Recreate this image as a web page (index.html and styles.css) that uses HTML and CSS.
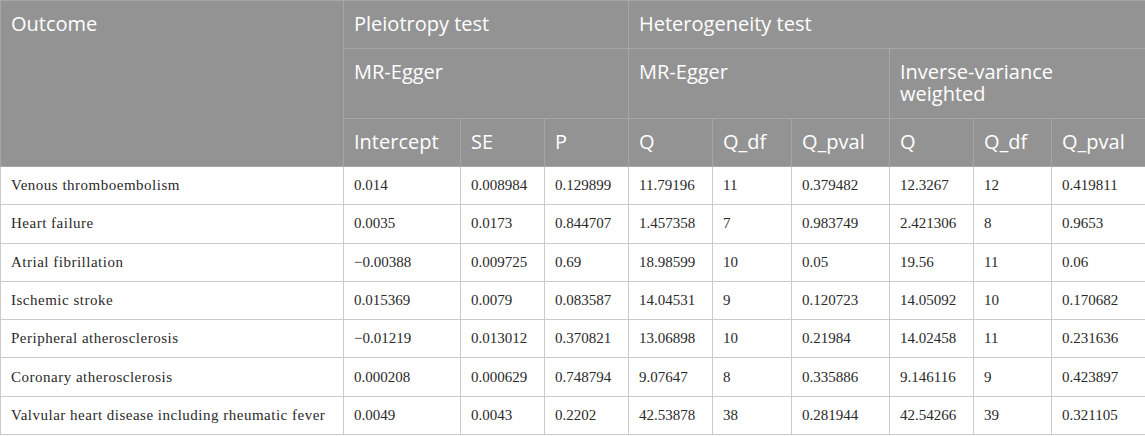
FILE: index.html
```html
<!DOCTYPE html>
<html>
<head>
<meta charset="utf-8">
<link rel="stylesheet" href="styles.css">
</head>
<body>
<table class="tbl">
  <colgroup>
    <col class="c-out"><col class="c-int"><col class="c-se"><col class="c-p">
    <col class="c-q"><col class="c-qdf"><col class="c-qp">
    <col class="c-q2"><col class="c-qdf2"><col class="c-qp2">
  </colgroup>
  <thead>
    <tr class="h1">
      <th rowspan="3">Outcome</th>
      <th colspan="3">Pleiotropy test</th>
      <th colspan="6">Heterogeneity test</th>
    </tr>
    <tr class="h2">
      <th colspan="3">MR-Egger</th>
      <th colspan="3">MR-Egger</th>
      <th colspan="3">Inverse-variance weighted</th>
    </tr>
    <tr class="h3">
      <th>Intercept</th><th>SE</th><th>P</th>
      <th>Q</th><th>Q_df</th><th>Q_pval</th>
      <th>Q</th><th>Q_df</th><th>Q_pval</th>
    </tr>
  </thead>
  <tbody>
    <tr><td class="name">Venous thromboembolism</td><td>0.014</td><td>0.008984</td><td>0.129899</td><td>11.79196</td><td>11</td><td>0.379482</td><td>12.3267</td><td>12</td><td>0.419811</td></tr>
    <tr><td class="name">Heart failure</td><td>0.0035</td><td>0.0173</td><td>0.844707</td><td>1.457358</td><td>7</td><td>0.983749</td><td>2.421306</td><td>8</td><td>0.9653</td></tr>
    <tr><td class="name">Atrial fibrillation</td><td>&minus;0.00388</td><td>0.009725</td><td>0.69</td><td>18.98599</td><td>10</td><td>0.05</td><td>19.56</td><td>11</td><td>0.06</td></tr>
    <tr><td class="name">Ischemic stroke</td><td>0.015369</td><td>0.0079</td><td>0.083587</td><td>14.04531</td><td>9</td><td>0.120723</td><td>14.05092</td><td>10</td><td>0.170682</td></tr>
    <tr><td class="name">Peripheral atherosclerosis</td><td>&minus;0.01219</td><td>0.013012</td><td>0.370821</td><td>13.06898</td><td>10</td><td>0.21984</td><td>14.02458</td><td>11</td><td>0.231636</td></tr>
    <tr><td class="name">Coronary atherosclerosis</td><td>0.000208</td><td>0.000629</td><td>0.748794</td><td>9.07647</td><td>8</td><td>0.335886</td><td>9.146116</td><td>9</td><td>0.423897</td></tr>
    <tr><td class="name">Valvular heart disease including rheumatic fever</td><td>0.0049</td><td>0.0043</td><td>0.2202</td><td>42.53878</td><td>38</td><td>0.281944</td><td>42.54266</td><td>39</td><td>0.321105</td></tr>
  </tbody>
</table>
</body>
</html>
```
FILE: styles.css
```css
html, body {
  margin: 0;
  padding: 0;
  background: #ffffff;
}
.tbl {
  width: 1145px;
  table-layout: fixed;
  border-collapse: collapse;
}
.c-out { width: 343px; }
.c-int { width: 117px; }
.c-se { width: 84px; }
.c-p { width: 84px; }
.c-q { width: 84px; }
.c-qdf { width: 79px; }
.c-qp { width: 98px; }
.c-q2 { width: 84px; }
.c-qdf2 { width: 78px; }
.c-qp2 { width: 94px; }

.tbl th {
  background: #939393;
  color: #ffffff;
  font-family: "Open Sans", "DejaVu Sans", sans-serif;
  font-weight: 400;
  font-size: 20px;
  line-height: 22px;
  text-align: left;
  vertical-align: top;
  padding: 12px 10px 13px 10px;
  height: 22px;
  border: 1px solid #a6a6a6;
}
.tbl tr.h2 th {
  height: 44px;
}
.tbl td {
  font-family: "Liberation Serif", "Times New Roman", serif;
  font-size: 15px;
  color: #2a2a2a;
  padding: 0 10px;
  height: 37.3px;
  vertical-align: middle;
  border: 1px solid #cbcbcb;
  white-space: nowrap;
}
.tbl td.name {
  letter-spacing: 0.5px;
}
```
